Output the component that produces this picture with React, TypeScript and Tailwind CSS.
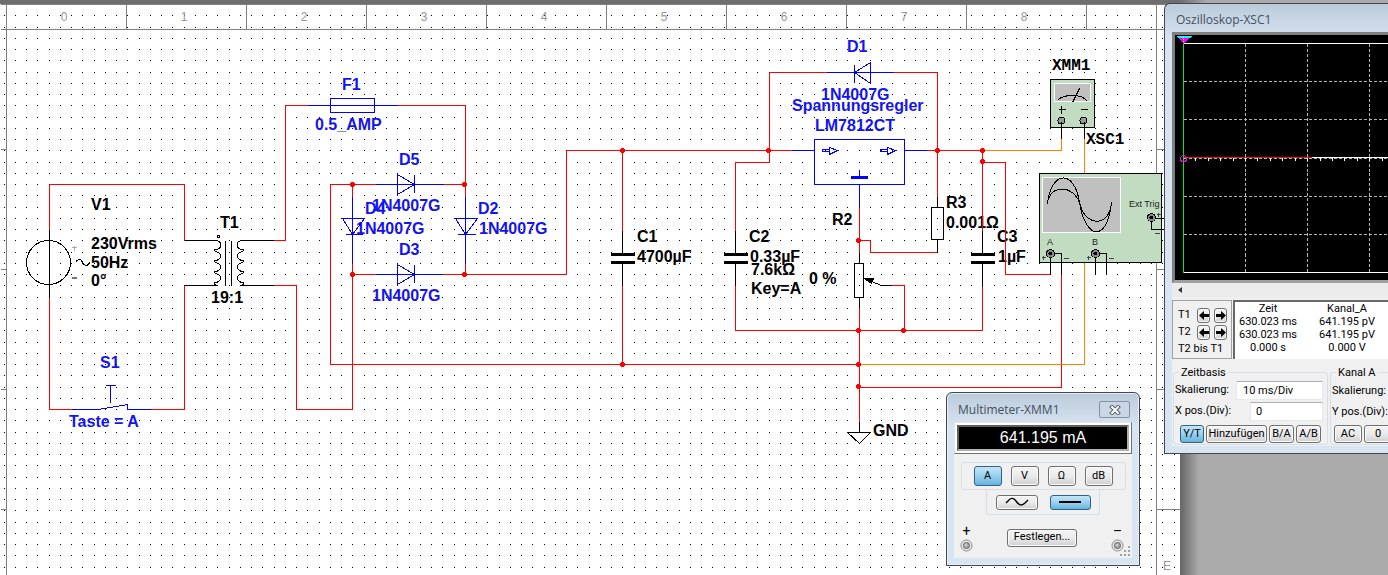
import type { ReactNode } from "react";

const RED = "#ff0000";
const BLUE = "#0000ff";
const ORANGE = "#ff8000";
const LABEL_BLUE = "#1414f0";

const gridX = [4, 15, 26, 37];
const gridY = [4, 15, 27, 38];

const wires: { d: string; c: string }[] = [
  { c: RED, d: "M49 229V184H184V240M49 297V409H71M150 409H184V285" },
  { c: RED, d: "M273 240H285V105H307M397 105H465V196M273 285H296V409H352V263" },
  { c: RED, d: "M375 184H330V364H859M352 184V196M443 184H465M352 274H375M442 274H566V150H791M465 263V274" },
  { c: RED, d: "M622 150V230M622 285V364M769 150V162H735V230M735 285V330H982V286" },
  { c: RED, d: "M769 150V72H826M893 72H937V196M926 150H982V230M982 162H1005V274H1050" },
  { c: RED, d: "M937 252H870V240H859M859 207V252M859 307V421M891 285H904V330M859 387H1061V274" },
  { c: ORANGE, d: "M982 150H1061V138M1084 138V364H859" },
  { c: BLUE, d: "M71 409H98L127 404V409H150M105 385H115M110 385V402" },
  { c: BLUE, d: "M307 105H397M330 98H374V112H330Z" },
  { c: BLUE, d: "M375 184H443M397 174V194L414 184ZM414 174V192" },
  { c: BLUE, d: "M375 274H442M397 264V284L414 274ZM414 264V282" },
  { c: BLUE, d: "M352 196V263M342 218H364L352 234ZM345 234H362" },
  { c: BLUE, d: "M465 196V263M455 218H477L465 234ZM457 234H475" },
  { c: BLUE, d: "M826 72H893M870 62V83L854 72ZM854 64V82" },
  { c: BLUE, d: "M791 150H814M904 150H926M814 139H904V184H814ZM859 184V207M859 169V176" },
  { c: BLUE, d: "M822 149H829V151H822ZM829 147V154L837 150ZM880 149H887V151H880ZM887 147V154L895 150Z" },
  { c: "#000", d: "M49 229V297M184 240H217M184 285H217M240 240H273M240 285H273M225 240V285M231 240V285" },
  { c: "#000", d: "M622 230V253M622 263V285M735 230V253M735 263V285M982 230V253M982 263V286" },
  { c: "#000", d: "M937 196V207M931 207H943V239H931ZM937 239V252" },
  { c: "#000", d: "M859 252V263M854 263H863V297H854ZM859 297V307M871 281L881 285H891M859 421V432M847 432H870L859 443Z" },
];

const nodes = [
  [352, 184], [464, 184], [352, 274], [464, 274], [622, 150], [768, 150], [622, 364],
  [937, 150], [982, 150], [982, 161], [858, 240], [858, 330], [903, 330], [858, 364], [858, 386],
];

const blueLabels: [string, number, number][] = [
  ["S1", 100, 368], ["Taste = A", 69, 427], ["F1", 342, 90], ["0.5_AMP", 315, 130],
  ["D5", 399, 165], ["1N4007G", 372, 211], ["D4", 365, 214], ["1N4007G", 356, 234],
  ["D2", 478, 214], ["1N4007G", 479, 234], ["D3", 399, 255], ["1N4007G", 372, 301],
  ["D1", 847, 52], ["1N4007G", 821, 100], ["Spannungsregler", 792, 111], ["LM7812CT", 815, 131],
];

const blackLabels: [string, number, number][] = [
  ["V1", 91, 210], ["230Vrms", 91, 249], ["50Hz", 91, 268], ["0°", 91, 286],
  ["T1", 220, 228], ["19:1", 211, 303], ["C1", 637, 242], ["4700µF", 637, 262],
  ["C2", 749, 242], ["0.33µF", 750, 262], ["7.6kΩ", 751, 275], ["Key=A", 751, 294],
  ["0 %", 809, 284], ["R2", 832, 225], ["R3", 946, 208], ["0.001Ω", 946, 228],
  ["C3", 997, 242], ["1µF", 998, 262], ["GND", 873, 436],
];

function Jack({ x, y }: { x: number; y: number }) {
  return (
    <g>
      <circle cx={x} cy={y} r="4" fill="#8a8a8a" stroke="#000" />
      <circle cx={x} cy={y} r="2" fill="#000" />
    </g>
  );
}

function Schematic() {
  return (
    <svg className="block min-h-0 w-full flex-1" aria-label="Schaltplan">
      <defs>
        <pattern id="grid" width="45" height="45" patternUnits="userSpaceOnUse">
          {gridX.map((x) => gridY.map((y) => <rect key={`${x}-${y}`} x={x} y={y === 4 ? 15 : y === 15 ? 27 : y === 27 ? 38 : 4} width="1" height="1" />))}
        </pattern>
        <linearGradient id="shade">
          <stop offset="0" stopColor="#656565" />
          <stop offset="1" stopColor="#ababab" />
        </linearGradient>
      </defs>
      <g transform="translate(0 -4)">
        <rect width="1180" height="110%" fill="#fff" />
        <rect x="1180" width="19" height="110%" fill="url(#shade)" />
        <rect width="1180" y="12" height="110%" fill="url(#grid)" shapeRendering="crispEdges" />

        <g transform="translate(.5 .5)" stroke="#808080" shapeRendering="crispEdges">
          <path d="M0 4H1180M0 29H1180" />
          <line x1="6" x2="6" y1="4" y2="110%" />
          <line x1="1156" x2="1156" y1="4" y2="110%" />
          {[126, 246, 366, 486, 606, 726, 846, 966, 1086].map((x) => <path key={x} d={`M${x} 4V29`} />)}
          {[149, 269, 389, 509].map((y) => <path key={y} d={`M0 ${y}H6M1156 ${y}H1180`} />)}
        </g>
        <g className="font-['Liberation_Sans'] text-[12px]" fill="#969696" textAnchor="middle">
          {[0, 1, 2, 3, 4, 5, 6, 7, 8].map((n) => <text key={n} x={64 + n * 120} y="21">{n}</text>)}
          <text x="1167" y="570">E</text>
        </g>

        <g className="font-['Liberation_Sans'] text-[16px] font-bold">
          {blackLabels.map(([t, x, y]) => <text key={t} x={x} y={y}>{t}</text>)}
          {blueLabels.map(([t, x, y]) => <text key={`${t}${x}`} x={x} y={y} fill={LABEL_BLUE}>{t}</text>)}
        </g>
        <g className="font-['Liberation_Mono'] text-[16px] font-bold">
          <text x="1052" y="70">XMM1</text>
          <text x="1086" y="144">XSC1</text>
        </g>

        <g transform="translate(.5 .5)" fill="none" shapeRendering="crispEdges">
          {wires.map((w) => <path key={w.d} d={w.d} stroke={w.c} />)}
          <circle cx="48" cy="262" r="22" stroke="#000" />
          <path d="M75 262C78 257 81 259 82 262S87 267 89 262" stroke="#000" />
          <path d="M71 247H76M74 245V250" stroke="#aaa" />
          <path d="M71 277H76" stroke="#777" strokeWidth="2" />
          <circle cx="218" cy="236" r="1" stroke="#000" />
          <path d="M216 240C222 241 222 249 214 249C213 251 216 251 217 252C222 253 221 260 214 260C213 262 216 262 217 263C222 264 221 271 214 271C213 273 216 273 217 274C222 275 221 282 214 282C213 284 216 285 217 285" stroke="#000" />
          <path d="M241 240C235 241 235 249 243 249C244 251 241 251 240 252C235 253 236 260 243 260C244 262 241 262 240 263C235 264 236 271 243 271C244 273 241 273 240 274C235 275 236 282 243 282C244 284 241 285 240 285" stroke="#000" />
          <path d="M864 278L873 278L871 283Z" fill="#000" stroke="#000" />
        </g>
        <g shapeRendering="crispEdges">
          {[611, 724, 971].map((x) => (
            <g key={x}>
              <rect x={x} y="253" width="24" height="3" />
              <rect x={x} y="261" width="24" height="3" />
            </g>
          ))}
          <rect x="851" y="176" width="17" height="3" fill={BLUE} />
          <g transform="translate(.5 .5)" fill={RED}>
            {nodes.map(([x, y]) => <circle key={`${x}-${y}`} cx={x} cy={y} r="2.5" />)}
          </g>
        </g>

        <g transform="translate(.5 .5)" shapeRendering="crispEdges">
          <rect x="1050" y="79" width="44" height="48" fill="#c1dcc1" stroke="#000" />
          <rect x="1054" y="83" width="36" height="18" fill="#c0c0c0" stroke="#fff" />
          <path d="M1057 100Q1061 95 1072 95T1087 101M1072 102L1079 88M1058 109H1065M1061 105V113M1080 109H1087" fill="none" stroke="#000" />
          <circle cx="1061" cy="120" r="3.5" fill="#999" stroke="#000" />
          <circle cx="1083" cy="120" r="3.5" fill="#999" stroke="#000" />
          <path d="M1061 121V138M1084 121V138" stroke="#000" />

          <rect x="1039" y="173" width="122" height="89" fill="#c1dcc1" stroke="#000" />
          <rect x="1042" y="177" width="78" height="55" fill="#c0c0c0" stroke="#fff" />
          <g fill="none" stroke="#000">
            <path d="M1047 204C1050 170 1074 168 1079 202C1085 240 1107 242 1111 202" />
            <path d="M1047 202C1050 184 1072 184 1079 202C1084 226 1109 228 1111 202" />
            <path d="M1050 253V274M1054 253H1061V274M1095 253V274M1099 253H1106V274M1155 218H1164M1151 221V229H1164" />
            <path d="M1041 257H1045M1043 255V259M1086 257H1090M1088 255V259M1156 214H1160M1158 212V216M1063 258H1068M1108 258H1113M1154 233H1159" stroke="#444" />
          </g>
          <Jack x={1050} y={253} />
          <Jack x={1095} y={253} />
          <Jack x={1151} y={217} />
        </g>
        <g className="font-['Liberation_Sans'] text-[9px]" fill="#222">
          <text x="1129" y="207">Ext Trig</text>
          <text x="1047" y="245">A</text>
          <text x="1092" y="245">B</text>
        </g>
      </g>
    </svg>
  );
}

const face = "flex items-center justify-center rounded-[3px] border whitespace-nowrap";
const plain = "border-[#707070] bg-linear-to-b from-[#f4f4f4] via-[#ebebeb] to-[#d0d0d0] shadow-[inset_0_0_0_1px_#fafafa]";
const lit = "border-[#2c628b] bg-linear-to-b from-[#c4e5f6] via-[#98d1ef] to-[#68b3db]";

function Btn({ on, className, label, children }: { on?: boolean; className: string; label?: string; children: ReactNode }) {
  return (
    <button type="button" aria-label={label} aria-pressed={on} className={`${face} ${on ? lit : plain} ${className}`}>
      {children}
    </button>
  );
}

function Terminal({ sign }: { sign: string }) {
  return (
    <div className="flex flex-col items-center">
      <span className="text-[14px] leading-4">{sign}</span>
      <svg width="13" height="13" viewBox="0 0 13 13">
        <circle cx="6.5" cy="6.5" r="5.5" fill="#eee" stroke="#888" />
        <circle cx="6.5" cy="6.5" r="3.2" fill="#999" stroke="#777" />
        <circle cx="6" cy="6" r="1.5" fill="#ccc" />
      </svg>
    </div>
  );
}

function Multimeter() {
  return (
    <section className="absolute top-[392px] left-[946px] flex w-[194px] flex-col rounded-t-[6px] border border-[#45454d] bg-linear-to-b from-[#bccbda] to-[#d7e4f2] to-20% px-[7px] pb-[7px] font-['Roboto',sans-serif] text-[11px] shadow-[inset_0_0_0_1px_#e6eef7]">
      <header className="flex h-[29px] items-center justify-between pt-1 pr-[2px] pl-1">
        <h2 className="font-['Open_Sans'] text-[12px] text-[#43505e]">Multimeter-XMM1</h2>
        <button type="button" aria-label="Schließen" className="flex h-[17px] w-[31px] items-center justify-center rounded-[2px] border border-[#8392a8] bg-[#c9d6e4]">
          <svg width="12" height="10" viewBox="0 0 12 10">
            <path d="M3 2L9 8M9 2L3 8" stroke="#59606b" strokeWidth="4" strokeLinecap="square" />
            <path d="M3 2L9 8M9 2L3 8" stroke="#fff" strokeWidth="2" strokeLinecap="square" />
          </svg>
        </button>
      </header>
      <div className="flex h-[136px] flex-col items-center bg-[#f0f0f0]">
        <div className="w-full border border-[#e4e4e4] border-r-[#707070] border-b-[#707070] bg-white p-[2px]">
          <output className="block border-2 border-t-[#606060] border-r-[#b0b0b0] border-b-[#b0b0b0] border-l-[#606060] bg-black text-center font-['Liberation_Sans'] text-[16px] leading-[22px] text-white">
            641.195 mA
          </output>
        </div>
        <div className="mt-2 flex h-[28px] w-[165px] items-center justify-center gap-[9px] rounded-[3px] border border-[#d5dfe5]">
          <Btn on className="h-[20px] w-[28px]">A</Btn>
          <Btn className="h-[20px] w-[28px]">V</Btn>
          <Btn className="h-[20px] w-[28px]">Ω</Btn>
          <Btn className="h-[20px] w-[28px]">dB</Btn>
        </div>
        <div className="flex h-[25px] w-[114px] items-center justify-center gap-3 rounded-b-[3px] border border-t-0 border-[#d5dfe5]">
          <Btn className="h-[15px] w-[42px]" label="Wechselstrom">
            <svg width="24" height="10" viewBox="0 0 24 10"><path d="M1 6L3 4C6 0 9 1 11 4S16 10 20 6L23 3" fill="none" stroke="#000" strokeWidth="1.4" /></svg>
          </Btn>
          <Btn on className="h-[15px] w-[41px]" label="Gleichstrom">
            <svg width="22" height="2"><rect width="22" height="2" /></svg>
          </Btn>
        </div>
        <div className="flex w-full items-center justify-between pt-2 pr-2 pl-[6px]">
          <Terminal sign="+" />
          <Btn className="h-[18px] w-[70px]">Festlegen...</Btn>
          <Terminal sign="–" />
        </div>
      </div>
      <svg className="absolute right-[8px] bottom-[8px]" width="11" height="11" fill="#a0a0a0">
        <path d="M8 0h2v2h-2zM8 4h2v2h-2zM4 4h2v2h-2zM8 8h2v2h-2zM4 8h2v2h-2zM0 8h2v2h-2z" />
      </svg>
    </section>
  );
}

function ScopeScreen() {
  return (
    <svg className="block h-[245px] w-full bg-black" aria-label="Oszilloskop-Anzeige">
      <g transform="translate(.5 .5)" shapeRendering="crispEdges">
        <g stroke="#b4b4b4" strokeDasharray="3 2">
          {[70, 132, 194].map((x) => <line key={x} x1={x} x2={x} y1="8" y2="237" />)}
          {[46, 84, 123, 161, 199].map((y) => <line key={y} x1="8" x2="100%" y1={y} y2={y} />)}
        </g>
        <g stroke="#fff">
          <line x1="8" x2="100%" y1="8" y2="8" />
          <line x1="8" x2="100%" y1="237" y2="237" />
          <line x1="136" x2="100%" y1="122" y2="122" />
          {[20, 33, 45, 58, 70, 82, 95, 107, 120, 132, 145, 157, 169, 182, 194, 207].map((x) => <path key={x} d={`M${x} 122V125`} />)}
        </g>
        <path d="M8 122H136" stroke="#f01414" />
        <path d="M8 8V237" stroke="#00f000" />
        <circle cx="8" cy="123" r="3" fill="none" stroke="#f0f" />
        <path d="M0 0H17L15 2H2Z" fill="#0ff" />
        <path d="M2 2H15L8 8Z" fill="#f0f" />
        <path d="M8 1V7" stroke="#ff8" strokeDasharray="1 1" />
      </g>
    </svg>
  );
}

function CursorRow({ name }: { name: string }) {
  return (
    <div className="flex items-center justify-between pr-1">
      <span>{name}</span>
      <span className="flex gap-1">
        <Btn className="h-[15px] w-[13px]" label={`${name} zurück`}>
          <svg width="10" height="9" viewBox="0 0 10 9"><path d="M0 4.5L5 0V3H10V6H5V9Z" /></svg>
        </Btn>
        <Btn className="h-[15px] w-[13px]" label={`${name} vor`}>
          <svg width="10" height="9" viewBox="0 0 10 9"><path d="M10 4.5L5 0V3H0V6H5V9Z" /></svg>
        </Btn>
      </span>
    </div>
  );
}

const field = "h-[19px] border border-[#e3e9ef] border-t-[#abadb3] bg-white";
const group = "relative h-[73px] shrink-0 rounded-[3px] border border-[#d5dfe5] pt-2 pl-[1px]";

function Oscilloscope() {
  return (
    <section className="absolute top-[3px] right-0 left-[1164px] flex h-[451px] flex-col overflow-hidden rounded-tl-[6px] border border-r-0 border-[#45454d] bg-linear-to-b from-[#bccbda] to-[#d7e4f2] to-8% pb-[7px] pl-[7px] font-['Roboto',sans-serif] text-[11px]">
      <header className="flex h-[28px] items-center pt-1 pl-1">
        <h2 className="font-['Open_Sans'] text-[12px] text-[#43505e]">Oszilloskop-XSC1</h2>
      </header>
      <div className="flex flex-1 flex-col bg-[#f0f0f0]">
        <div className="border-3 border-r-0 border-[#808080] border-b-[#a0a0a0]">
          <ScopeScreen />
        </div>
        <div className="flex h-[14px] items-center bg-[#ebebeb] pl-[6px]">
          <svg width="4" height="6"><path d="M4 0V6L0 3Z" fill="#333" /></svg>
        </div>
        <div className="mt-[3px] flex gap-[1px]">
          <div className="flex h-[59px] w-[60px] shrink-0 flex-col gap-[1px] border border-[#a0a0a0] py-[6px] pl-[5px] leading-[16px]">
            <CursorRow name="T1" />
            <CursorRow name="T2" />
            <span className="whitespace-nowrap">T2 bis T1</span>
          </div>
          <div className="h-[59px] flex-1 overflow-hidden border-t-2 border-l-2 border-[#696969] bg-white">
            <table className="w-[158px] table-fixed text-center leading-[13px]">
              <thead>
                <tr><th className="w-[66px] font-normal">Zeit</th><th className="font-normal">Kanal_A</th></tr>
              </thead>
              <tbody className="whitespace-nowrap">
                <tr><td>630.023 ms</td><td>641.195 pV</td></tr>
                <tr><td>630.023 ms</td><td>641.195 pV</td></tr>
                <tr><td>0.000 s</td><td>0.000 V</td></tr>
              </tbody>
            </table>
          </div>
        </div>
        <div className="mt-[13px] flex gap-[2px] overflow-visible pl-[1px] whitespace-nowrap">
          <div role="group" aria-label="Zeitbasis" className={`${group} w-[155px]`}>
            <span className="absolute -top-2 left-[5px] bg-[#f0f0f0] px-[2px] leading-[16px]">Zeitbasis</span>
            <div className="flex items-center justify-between pr-1">
              <label htmlFor="scale">Skalierung:</label>
              <input id="scale" defaultValue="10 ms/Div" className={`${field} w-[87px] pl-[6px]`} />
            </div>
            <div className="mt-[2px] flex items-center justify-between pr-1">
              <label htmlFor="xpos">X pos.(Div):</label>
              <input id="xpos" defaultValue="0" className={`${field} w-[73px] pl-[5px]`} />
            </div>
            <div className="mt-1 flex gap-[2px] pl-[5px]">
              <Btn on className="h-[18px] w-[24px]">Y/T</Btn>
              <Btn className="h-[18px] w-[61px]">Hinzufügen</Btn>
              <Btn className="h-[18px] w-[25px]">B/A</Btn>
              <Btn className="h-[18px] w-[25px]">A/B</Btn>
            </div>
          </div>
          <div role="group" aria-label="Kanal A" className={`${group} w-[155px]`}>
            <span className="absolute -top-2 left-[5px] bg-[#f0f0f0] px-[2px] leading-[16px]">Kanal A</span>
            <p className="leading-[19px]">Skalierung:</p>
            <p className="mt-[2px] leading-[19px]">Y pos.(Div):</p>
            <div className="mt-1 flex gap-[2px] pl-[2px]">
              <Btn className="h-[18px] w-[28px]">AC</Btn>
              <Btn className="h-[18px] w-[28px]">0</Btn>
            </div>
          </div>
        </div>
      </div>
    </section>
  );
}

export default function App() {
  return (
    <main className="relative flex h-screen min-h-[575px] flex-col overflow-hidden bg-[#ababab] text-black">
      <div className="h-1 shrink-0 bg-linear-to-r from-[#6e6e6e] from-85% to-[#ababab] to-87%" />
      <Schematic />
      <Multimeter />
      <Oscilloscope />
    </main>
  );
}
